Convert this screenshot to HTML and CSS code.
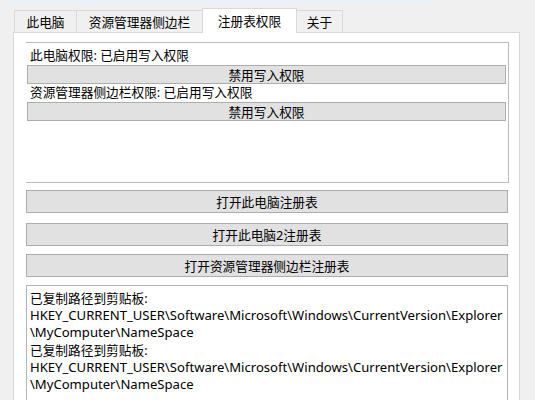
FILE: index.html
```html
<!DOCTYPE html>
<html lang="zh-CN">
<head>
  <meta charset="UTF-8">
  <title>注册表权限</title>
  <link rel="stylesheet" href="styles.css">
</head>
<body>
<div class="window">
  <div class="topline"></div>

  <div class="tabs">
    <div class="tab tab-pc">此电脑</div>
    <div class="tab tab-nav">资源管理器侧边栏</div>
    <div class="tab tab-reg active">注册表权限</div>
    <div class="tab tab-about">关于</div>
  </div>

  <div class="page">
    <div class="group">
      <div class="label">此电脑权限: 已启用写入权限</div>
      <button class="btn small">禁用写入权限</button>
      <div class="label">资源管理器侧边栏权限: 已启用写入权限</div>
      <button class="btn small">禁用写入权限</button>
    </div>

    <button class="btn big first">打开此电脑注册表</button>
    <button class="btn big second">打开此电脑2注册表</button>
    <button class="btn big third">打开资源管理器侧边栏注册表</button>

    <div class="log">
      <div class="line">已复制路径到剪贴板:</div>
      <div class="line latin">HKEY_CURRENT_USER\Software\Microsoft\Windows\CurrentVersion\Explorer</div>
      <div class="line latin">\MyComputer\NameSpace</div>
      <div class="line">已复制路径到剪贴板:</div>
      <div class="line latin">HKEY_CURRENT_USER\Software\Microsoft\Windows\CurrentVersion\Explorer</div>
      <div class="line latin">\MyComputer\NameSpace</div>
    </div>
  </div>
</div>
</body>
</html>
```

FILE: styles.css
```css
body {
  margin: 0;
  background-color: #f0f0f0;
  font-family: "Noto Sans", "Noto Sans CJK SC", sans-serif;
  font-size: 12.7px;
  color: #000;
  overflow: hidden;
}

.window {
  width: 535px;
  height: 400px;
  overflow: hidden;
}

.topline {
  height: 2px;
  width: 422px;
  margin-left: 8px;
  background-color: #e6f1fa;
}

.tabs {
  display: flex;
  align-items: flex-end;
  height: 30px;
  margin-left: 14px;
  position: relative;
  z-index: 1;
}

.tab {
  height: 22px;
  line-height: 22px;
  text-align: center;
  border: 1px solid #d9d9d9;
  border-bottom: none;
  margin-left: -1px;
  box-sizing: border-box;
}

.tab-pc { width: 63px; margin-left: 0; }
.tab-nav { width: 127px; }
.tab-reg { width: 95px; }
.tab-about { width: 47px; }

.tab.active {
  height: 25px;
  line-height: 24px;
  background-color: white;
  margin-bottom: -1px;
}

.page {
  margin-left: 13px;
  width: 507px;
  height: 368px;
  box-sizing: border-box;
  background-color: white;
  border: 1px solid #d9d9d9;
  border-bottom: none;
  padding: 9px 0 0 12px;
  overflow: hidden;
}

.group {
  width: 483px;
  height: 141px;
  box-sizing: border-box;
  border: 1px solid #bcbcbc;
  border-left: none;
  padding-top: 4px;
}

.label {
  height: 18px;
  line-height: 18px;
  padding-left: 4px;
  margin-top: -1px;
  margin-bottom: 1px;
}

.btn {
  display: block;
  box-sizing: border-box;
  background-color: #e1e1e1;
  border: 1px solid #adadad;
  font-family: inherit;
  font-size: 12.7px;
  color: #000;
  padding: 0;
}

.btn.small {
  width: 479px;
  height: 19px;
  line-height: 16px;
  margin-left: 1px;
}

.btn.big {
  width: 482px;
  height: 23px;
}

.first { margin-top: 7px; }
.second { margin-top: 10px; }
.third { margin-top: 8px; }

.log {
  margin-top: 8px;
  width: 482px;
  height: 140px;
  box-sizing: border-box;
  border: 1px solid #b4b4b4;
  padding: 4px 0 0 3px;
  line-height: 17.2px;
}

.latin {
  font-size: 13.1px;
  white-space: nowrap;
}
```
